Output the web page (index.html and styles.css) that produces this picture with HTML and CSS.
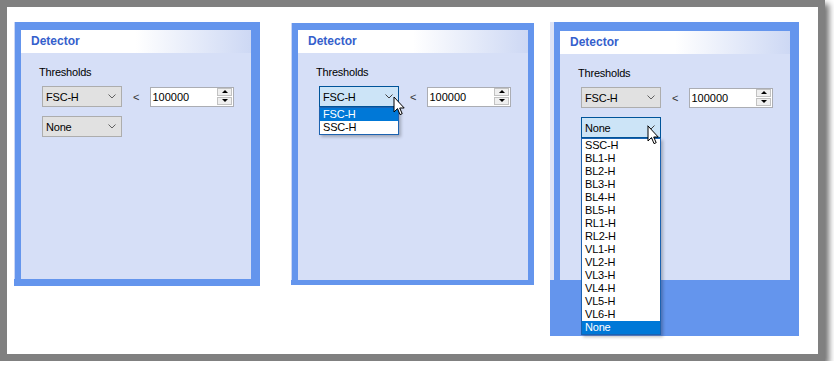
FILE: index.html
```html
<!DOCTYPE html>
<html lang="en">

<head>
    <meta charset="UTF-8">
    <meta name="viewport" content="width=device-width, initial-scale=1.0">
    <title>Detector Thresholds</title>
    <link rel="stylesheet" href="styles.css">
</head>

<body>
    <div class="frame">

        <!-- closed state -->
        <div class="panel panel-a">
            <div class="panel-inner">
                <div class="panel-title">Detector</div>
                <div class="panel-body">
                    <div class="field-label">Thresholds</div>
                    <div class="threshold-row">
                        <div class="combo">
                            <span class="combo-text">FSC-H</span>
                            <svg class="chevron" width="8" height="5" viewBox="0 0 8 5"><path d="M0.5 0.5 L4 4 L7.5 0.5" fill="none" stroke="#606060" stroke-width="1"/></svg>
                        </div>
                        <span class="lt">&lt;</span>
                        <div class="spin">
                            <span class="spin-value">100000</span>
                            <div class="spin-btns">
                                <div class="spin-btn up"></div>
                                <div class="spin-btn down"></div>
                            </div>
                        </div>
                    </div>
                    <div class="combo combo-second">
                        <span class="combo-text">None</span>
                        <svg class="chevron" width="8" height="5" viewBox="0 0 8 5"><path d="M0.5 0.5 L4 4 L7.5 0.5" fill="none" stroke="#606060" stroke-width="1"/></svg>
                    </div>
                </div>
            </div>
        </div>

        <!-- first detector list open -->
        <div class="panel panel-b">
            <div class="panel-inner">
                <div class="panel-title">Detector</div>
                <div class="panel-body">
                    <div class="field-label">Thresholds</div>
                    <div class="threshold-row">
                        <div class="combo open">
                            <span class="combo-text">FSC-H</span>
                            <svg class="chevron" width="8" height="5" viewBox="0 0 8 5"><path d="M0.5 0.5 L4 4 L7.5 0.5" fill="none" stroke="#404040" stroke-width="1"/></svg>
                            <div class="dropdown">
                                <div class="dropdown-item selected">FSC-H</div>
                                <div class="dropdown-item">SSC-H</div>
                            </div>
                            <svg class="cursor" width="13" height="21" viewBox="0 0 13 21"><path d="M1 1 V16 L4.5 12.6 L7 18.6 L9.2 17.7 L6.7 12 H11.2 Z" fill="#fff" stroke="#000" stroke-width="1" stroke-linejoin="miter"/></svg>
                        </div>
                        <span class="lt">&lt;</span>
                        <div class="spin">
                            <span class="spin-value">100000</span>
                            <div class="spin-btns">
                                <div class="spin-btn up"></div>
                                <div class="spin-btn down"></div>
                            </div>
                        </div>
                    </div>
                </div>
            </div>
        </div>

        <!-- second detector list open -->
        <div class="panel panel-c">
            <div class="panel-inner">
                <div class="panel-title">Detector</div>
                <div class="panel-body">
                    <div class="field-label">Thresholds</div>
                    <div class="threshold-row">
                        <div class="combo">
                            <span class="combo-text">FSC-H</span>
                            <svg class="chevron" width="8" height="5" viewBox="0 0 8 5"><path d="M0.5 0.5 L4 4 L7.5 0.5" fill="none" stroke="#606060" stroke-width="1"/></svg>
                        </div>
                        <span class="lt">&lt;</span>
                        <div class="spin">
                            <span class="spin-value">100000</span>
                            <div class="spin-btns">
                                <div class="spin-btn up"></div>
                                <div class="spin-btn down"></div>
                            </div>
                        </div>
                    </div>
                    <div class="combo combo-second open">
                        <span class="combo-text">None</span>
                        <svg class="chevron" width="8" height="5" viewBox="0 0 8 5"><path d="M0.5 0.5 L4 4 L7.5 0.5" fill="none" stroke="#404040" stroke-width="1"/></svg>
                        <div class="dropdown">
                            <div class="dropdown-item">SSC-H</div>
                            <div class="dropdown-item">BL1-H</div>
                            <div class="dropdown-item">BL2-H</div>
                            <div class="dropdown-item">BL3-H</div>
                            <div class="dropdown-item">BL4-H</div>
                            <div class="dropdown-item">BL5-H</div>
                            <div class="dropdown-item">RL1-H</div>
                            <div class="dropdown-item">RL2-H</div>
                            <div class="dropdown-item">VL1-H</div>
                            <div class="dropdown-item">VL2-H</div>
                            <div class="dropdown-item">VL3-H</div>
                            <div class="dropdown-item">VL4-H</div>
                            <div class="dropdown-item">VL5-H</div>
                            <div class="dropdown-item">VL6-H</div>
                            <div class="dropdown-item selected">None</div>
                        </div>
                        <svg class="cursor" width="13" height="21" viewBox="0 0 13 21"><path d="M1 1 V16 L4.5 12.6 L7 18.6 L9.2 17.7 L6.7 12 H11.2 Z" fill="#fff" stroke="#000" stroke-width="1" stroke-linejoin="miter"/></svg>
                    </div>
                </div>
            </div>
        </div>

    </div>
</body>

</html>
```

FILE: styles.css
```css
body {
    margin: 0;
    background: #fff;
    font-family: "Liberation Sans", Arial, sans-serif;
    font-size: 11px;
    color: #000;
}

.frame {
    box-sizing: border-box;
    width: 825px;
    height: 361px;
    border: 7px solid #808080;
    background: #fff;
    box-shadow: 4px 4px 6px rgba(0, 0, 0, 0.55);
    display: flex;
    align-items: flex-start;
    padding: 15px 0 0 7px;
}

/* panels */
.panel {
    position: relative;
    flex: none;
    border: solid #6495ed;
}

.panel::before {
    content: "";
    position: absolute;
    bottom: 0;
    width: 1px;
    background: #c9d6f6;
}

.panel-a {
    border-width: 8px 9px 7px 7px;
}

.panel-a::before {
    left: -7px;
    top: -8px;
}

.panel-b {
    border-width: 7px 6px 5px 7px;
    margin: 1px 0 0 31px;
}

.panel-b::before {
    left: -7px;
    top: -7px;
}

.panel-c {
    border-width: 9px 9px 56px 10px;
    margin-left: 16px;
}

.panel-c::before {
    left: -10px;
    top: -9px;
    width: 4px;
    background: #dde3f6;
}

.panel-inner {
    width: 230px;
    height: 249px;
    background: #d6dff7;
}

.panel-b .panel-inner {
    height: 250px;
}

.panel-title {
    height: 23px;
    line-height: 23px;
    padding-left: 10px;
    font-size: 12px;
    font-weight: bold;
    color: #3560cc;
    background: linear-gradient(to right, #fff 50%, #cdd8f4);
}

.panel-body {
    padding: 13px 0 0 18px;
}

.field-label {
    line-height: 13px;
    letter-spacing: -0.2px;
}

.threshold-row {
    display: flex;
    align-items: center;
    margin: 7px 0 0 3px;
}

/* combo boxes */
.combo {
    position: relative;
    box-sizing: border-box;
    width: 80px;
    height: 21px;
    border: 1px solid #adadad;
    background: #e1e1e1;
    display: flex;
    align-items: center;
    justify-content: space-between;
    padding: 0 5px 0 3px;
}

.combo-second {
    margin: 9px 0 0 3px;
}

.combo.open {
    background: #cce4f7;
    border-color: #005499;
}

.combo-text {
    letter-spacing: -0.2px;
}

.chevron {
    display: block;
}

.lt {
    margin: 0 11px;
    color: #333;
}

/* numeric up-down */
.spin {
    box-sizing: border-box;
    width: 84px;
    height: 20px;
    border: 1px solid #abadb3;
    background: #fff;
    display: flex;
    align-items: center;
    padding-left: 1px;
}

.spin-value {
    flex: 1;
}

.spin-btns {
    align-self: flex-start;
    width: 15px;
    height: 17px;
    margin-right: 1px;
    display: flex;
    flex-direction: column;
    gap: 1px;
}

.spin-btn {
    position: relative;
    flex: 1;
    border: 1px solid #c2c2c2;
    background: #efefef;
}

.spin-btn::after {
    content: "";
    position: absolute;
    left: 50%;
    top: 50%;
    margin: -2px 0 0 -3px;
    border-left: 3px solid transparent;
    border-right: 3px solid transparent;
}

.spin-btn.up::after {
    border-bottom: 3px solid #000;
}

.spin-btn.down::after {
    border-top: 3px solid #000;
}

/* open list */
.dropdown {
    position: absolute;
    top: calc(100% + 1px);
    left: -1px;
    z-index: 2;
    box-sizing: border-box;
    width: 80px;
    border: 1px solid #1c62b0;
    background: #fff;
    box-shadow: 2px 2px 3px rgba(0, 0, 0, 0.25);
}

.dropdown-item {
    height: 13px;
    line-height: 13px;
    padding-left: 3px;
    letter-spacing: -0.2px;
}

.dropdown-item.selected {
    background: #0078d7;
    color: #fff;
}

.cursor {
    position: absolute;
    z-index: 3;
}

.panel-b .cursor {
    left: 73px;
    top: 9px;
}

.panel-c .cursor {
    left: 65px;
    top: 7px;
}
```
